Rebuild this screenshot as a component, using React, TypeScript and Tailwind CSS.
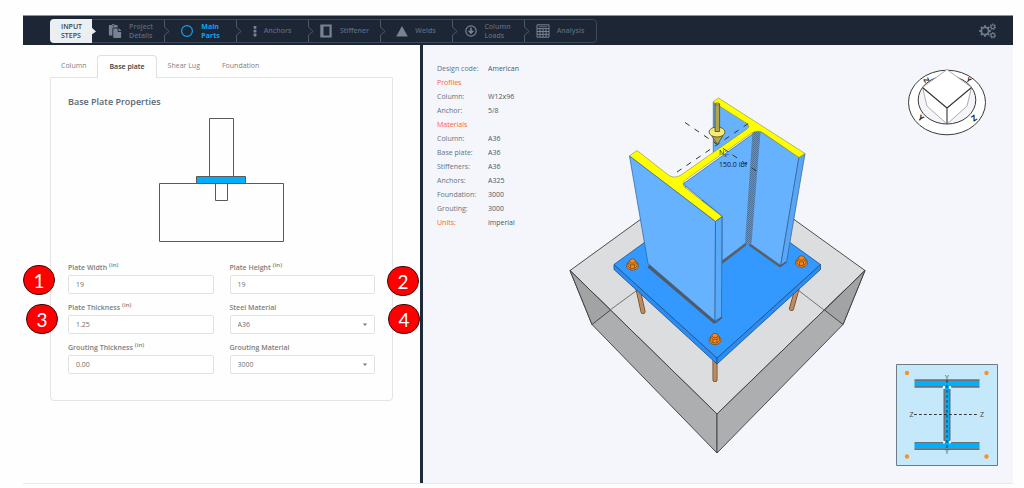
import type { ReactNode } from "react";
import { FaPaste } from "react-icons/fa";

const stepIcons = {
  project: <FaPaste className="size-3.5" aria-hidden />,
  parts: (
    <svg className="size-3.5" viewBox="0 0 14 14" aria-hidden>
      <circle cx="7" cy="7" r="5.4" fill="none" stroke="currentColor" strokeWidth="1.2" />
    </svg>
  ),
  anchors: (
    <svg className="h-3 w-1" viewBox="0 0 4 12" fill="currentColor" aria-hidden>
      <rect x=".6" y="1" width="2.8" height="2.8" rx=".6" />
      <rect x=".6" y="4.8" width="2.8" height="2.8" rx=".6" />
      <rect x=".6" y="8.6" width="2.8" height="2.8" rx=".6" />
    </svg>
  ),
  stiffener: (
    <svg className="size-3.5" viewBox="0 0 14 14" aria-hidden>
      <path fill="currentColor" fillRule="evenodd" d="M1.3 .5h11.4v13H1.3zM4.500 2.5v9h6v-9z" />
    </svg>
  ),
  welds: (
    <svg className="size-3" viewBox="0 0 12 12" aria-hidden>
      <path fill="currentColor" d="M6 1l5.8 10.4H.2z" />
    </svg>
  ),
  loads: (
    <svg className="size-3" viewBox="0 0 12 12" fill="none" stroke="currentColor" aria-hidden>
      <circle cx="6" cy="6" r="5.2" strokeWidth="1.2" />
      <path strokeWidth="1.6" d="M6 2.8v5M3.7 5.8L6 8.2l2.3-2.4" />
    </svg>
  ),
  analysis: (
    <svg className="size-3.5" viewBox="0 0 14 14" fill="none" stroke="currentColor" aria-hidden>
      <path strokeWidth="1" d="M1 .8h12v12.4H1zM1 4.6h12M1 7.5h12M1 10.3h12M4 4.6v8.6M7 4.6v8.6M10 4.6v8.6" />
      <path strokeWidth=".8" d="M2.8 2.7h8.4" />
    </svg>
  ),
};

const steps: { lines: string[]; icon: ReactNode; active?: boolean }[] = [
  { lines: ["Project", "Details"], icon: stepIcons.project },
  { lines: ["Main", "Parts"], icon: stepIcons.parts, active: true },
  { lines: ["Anchors"], icon: stepIcons.anchors },
  { lines: ["Stiffener"], icon: stepIcons.stiffener },
  { lines: ["Welds"], icon: stepIcons.welds },
  { lines: ["Column", "Loads"], icon: stepIcons.loads },
  { lines: ["Analysis"], icon: stepIcons.analysis },
];

const info: [string, string?][] = [
  ["Design code:", "American"],
  ["Profiles"],
  ["Column:", "W12x96"],
  ["Anchor:", "5/8"],
  ["Materials"],
  ["Column:", "A36"],
  ["Base plate:", "A36"],
  ["Stiffeners:", "A36"],
  ["Anchors:", "A325"],
  ["Foundation:", "3000"],
  ["Grouting:", "3000"],
  ["Units:", "imperial"],
];

function Gear({ cx, cy, r, teeth, w }: { cx: number; cy: number; r: number; teeth: number; w: number }) {
  const step = 360 / teeth;
  return (
    <g transform={`translate(${cx} ${cy})`}>
      <circle r={r} fill="none" stroke="currentColor" strokeWidth={w} />
      {Array.from({ length: teeth }, (_, i) => (
        <rect key={i} x={-w * 0.55} y={-r - w * 1.2} width={w * 1.1} height={w} fill="currentColor" transform={`rotate(${i * step})`} />
      ))}
    </g>
  );
}

function StepDivider() {
  return (
    <svg className="-mr-1.5 h-full w-1.5 shrink-0" viewBox="0 0 6 22" fill="none" stroke="#4d596b" aria-hidden>
      <path d="M.5 0v7l4.5 4.5L.5 15v7" />
    </svg>
  );
}

function Header() {
  return (
    <header className="flex h-[30px] items-center justify-between border-t border-[#8d939c] bg-[#1c2635] pl-[27px] pr-4">
      <nav aria-label="Input steps" className="flex h-6 items-stretch rounded-sm border border-[#3c4757]">
        <div className="-m-px flex w-[42px] items-center rounded-l-sm bg-[#eceff2] pl-[11px] text-[7px] leading-[9px] font-semibold text-[#3a4350]">
          <span>
            <span className="block">INPUT</span>
            <span className="block">STEPS</span>
          </span>
        </div>
        <svg className="h-full w-1.5" viewBox="0 0 6 22" aria-hidden>
          <path d="M0 7l5 4.5L0 15z" fill="#eceff2" />
        </svg>
        <ol className="flex">
          {steps.map((s, i) => (
            <li key={s.lines[0]} className={i === 0 ? "flex w-[67px]" : "flex w-[72px]"}>
              <button
                type="button"
                className={
                  s.active
                    ? "flex flex-1 items-center justify-center gap-[7px] text-left text-[7px] leading-[9px] font-bold text-[#0ea5ee]"
                    : "flex flex-1 items-center justify-center gap-[7px] text-left text-[7px] leading-[9px] font-semibold text-[#5c687a]"
                }
              >
                <span className={s.active ? "" : "text-[#778293]"}>{s.icon}</span>
                <span>
                  {s.lines.map((l) => (
                    <span key={l} className="block">
                      {l}
                    </span>
                  ))}
                </span>
              </button>
              {i < steps.length - 1 && <StepDivider />}
            </li>
          ))}
        </ol>
      </nav>
      <button type="button" aria-label="Settings" className="text-[#6c7a8d]">
        <svg className="h-4 w-[18px]" viewBox="0 0 18 16">
          <Gear cx={6} cy={8} r={3.6} teeth={8} w={1.8} />
          <Gear cx={13.8} cy={3.8} r={1.8} teeth={7} w={1.2} />
          <Gear cx={13.8} cy={12.3} r={1.8} teeth={7} w={1.2} />
        </svg>
      </button>
    </header>
  );
}

function Badge({ n, place }: { n: number; place: string }) {
  return (
    <span
      className={`absolute z-10 flex h-[30px] w-8 items-center justify-center rounded-full border border-[#3a0a0a] bg-[#fe0000] font-['Lato',sans-serif] text-[19px] leading-none text-white ${place}`}
    >
      {n}
    </span>
  );
}

const control =
  "block h-[19px] w-full appearance-none rounded-xs border border-[#e2e2e2] bg-white px-[7px] text-[7px] leading-[12px] text-[#6f6f6f]";

function Field({
  id,
  label,
  unit,
  value,
  select,
  badge,
}: {
  id: string;
  label: string;
  unit?: string;
  value: string;
  select?: boolean;
  badge?: ReactNode;
}) {
  return (
    <div className="relative">
      <label htmlFor={id} className="block h-[14px] text-[7px] leading-[14px] font-semibold text-[#7d7d7d]">
        {label}
        {unit && <sup className="ml-0.5 text-[6px] leading-none font-semibold">({unit})</sup>}
      </label>
      {select ? (
        <div className="relative">
          <select id={id} defaultValue={value} className={control}>
            <option>{value}</option>
          </select>
          <svg className="pointer-events-none absolute top-2 right-[7px] h-1 w-1.5" viewBox="0 0 6 4" aria-hidden>
            <path d="M.8.5h4.400L3 3z" fill="#7b7b7b" />
          </svg>
        </div>
      ) : (
        <input id={id} type="text" defaultValue={value} className={control} />
      )}
      {badge}
    </div>
  );
}

function PlateSketch() {
  return (
    <svg className="mx-auto mt-2 h-[126px] w-[126px]" viewBox="0 0 126 126" fill="none" stroke="#5a5a5a" strokeWidth="1" role="img" aria-label="Base plate section">
      <path d="M50.5 1.5h24v58h-24zM.5 66.5h124v58H.5zM56.5 66.5h12v17h-12z" />
      <path d="M37.5 59.5h49v7h-49z" fill="#00aeff" />
    </svg>
  );
}

const tabs = ["Column", "Base plate", "Shear Lug", "Foundation"];

function Editor() {
  return (
    <section className="border-r-[3px] border-[#1f2937] px-[27px] pt-[10px]">
      <div role="tablist" className="relative z-10 flex text-[7px] leading-[22px] text-[#7f7f7f]">
        {tabs.map((t) => (
          <button
            key={t}
            type="button"
            role="tab"
            aria-selected={t === "Base plate"}
            className={
              t === "Base plate"
                ? "-mb-px h-[23px] rounded-t-sm border border-b-0 border-[#e0e0e0] bg-white px-[11px] font-semibold text-[#343d45]"
                : "h-[22px] px-[11px]"
            }
          >
            {t}
          </button>
        ))}
      </div>
      <div className="rounded-b-sm border border-[#e4e4e4] px-[17px] pt-[17px] pb-[26px]">
        <h1 className="text-[9px] leading-[14px] font-semibold text-[#5c6973]">Base Plate Properties</h1>
        <PlateSketch />
        <form className="mt-[18px] grid grid-cols-2 gap-x-4 gap-y-[7px]">
          <Field id="plate-width" label="Plate Width" unit="in" value="19" badge={<Badge n={1} place="top-1 -left-[45px]" />} />
          <Field id="plate-height" label="Plate Height" unit="in" value="19" badge={<Badge n={2} place="top-[5px] -right-[44px]" />} />
          <Field id="plate-thickness" label="Plate Thickness" unit="in" value="1.25" badge={<Badge n={3} place="top-[3px] -left-[42px]" />} />
          <Field id="steel" label="Steel Material" value="A36" select badge={<Badge n={4} place="top-[3px] -right-[45px]" />} />
          <Field id="grout-thickness" label="Grouting Thickness" unit="in" value="0.00" />
          <Field id="grout" label="Grouting Material" value="3000" select />
        </form>
      </div>
    </section>
  );
}

function Bolt({ x, y }: { x: number; y: number }) {
  return (
    <g transform={`translate(${x} ${y})`} stroke="#7a3f08" strokeWidth=".7" fill="#f08a24">
      <ellipse cx="0" cy="1.6" rx="6" ry="4.6" />
      <path d="M-4.5-1.5L-2-4H2.2L4.5-1.5V2.2L2 4.4H-2L-4.5 2.2z" />
      <path d="M-4.5-1.5L-2 .8H2L4.5-1.5M-2 .8v3.4M2 .8v3.4" fill="none" />
      <ellipse cx="0" cy="-3" rx="3" ry="2.2" />
    </g>
  );
}

function Scene() {
  return (
    <svg className="mt-[43px] h-[370px] w-[306px]" viewBox="564 88 306 370" role="img" aria-label="3D model of the column base">
      <defs>
        <pattern id="fillet" width="2" height="2" patternUnits="userSpaceOnUse">
          <rect width="2" height="2" fill="#5d97d3" />
          <path d="M0 0h1v1H0zM1 1h1v1H1z" fill="#4b6f96" />
        </pattern>
      </defs>
      <g stroke="#3c3c3c" strokeWidth=".9" strokeLinejoin="round">
        <path d="M570 270.5L717 164 865 270.5 717 414z" fill="#dcdddf" />
        <path d="M570 270.5L717 414V453L592 324.5z" fill="#adaeb0" />
        <path d="M865 270.5L717 414V453L843 324.5z" fill="#adaeb0" />
        <path d="M570 270.5L610.5 310 592 324.5z" fill="#a2a3a5" />
        <path d="M865 270.5L824.5 310 843 324.5z" fill="#a2a3a5" />
        <path d="M610 310L636 291M824 310L798 290" fill="none" stroke="#666" />
      </g>
      <g strokeLinecap="round">
        <path d="M638 289L643 311.5M797 289L791.5 308.5M715 360V379.5" stroke="#6d4a2c" strokeWidth="5" />
        <path d="M638 289L643 311.5M797 289L791.5 308.5M715 360V379.5" stroke="#bd8c60" strokeWidth="3.4" />
      </g>
      <g stroke="#1d4f8a" strokeWidth=".8" strokeLinejoin="round">
        <path d="M614 264.5V269.5L717 364V358z" fill="#2b8cf2" />
        <path d="M820.5 264.5V269.5L717 364V358z" fill="#2b8cf2" />
        <path d="M614 264.5L717 190 820.5 264.5 717 358z" fill="#3399ff" />
      </g>
      <Bolt x={632.5} y={264} />
      <Bolt x={801.5} y={261} />
      <Bolt x={715} y={338.5} />

      <g stroke="#2f5f93" strokeWidth=".7" strokeLinejoin="round">
        <path d="M713.3 102L752 125 748 131 713.3 154z" fill="#66b2ff" />
        <path d="M683 184L757 131 747 243 722 261V216z" fill="#66b2ff" />
        <path d="M760 131L799 157 780.5 266.5 748 243z" fill="#66b2ff" />
        <path d="M799 157L805 153.5 786.5 262.5 780.5 266.5z" fill="#5aa6f5" />
      </g>
      <path d="M752.5 131H760.5L751.5 243.5H745z" fill="url(#fillet)" />
      <path d="M722 262.5L746 244M749.5 244.5L780.5 266.5" stroke="#59606a" strokeWidth="2.6" fill="none" />
      <path d="M780.5 266L786 262" stroke="#4d5660" strokeWidth="1.2" />
      <path
        d="M713 102L718.5 98 805 153.5 799 157.5 762.5 132.5Q757 129.500 751 133.5L686 179.500Q681 183 685 187.500L722 216.5 715.5 221.5 629.5 156 637 150.500 669 175.500Q675 179 681 175L747 129Q750.5 126 747 123.500z"
        fill="#ffff00"
        stroke="#8c8c2c"
        strokeWidth=".6"
      />
      <path d="M648.5 266L715 322.5" stroke="#525a64" strokeWidth="3.4" />
      <path d="M715 323L722 317.5" stroke="#4d5660" strokeWidth="1.2" />
      <g stroke="#2f5f93" strokeWidth=".7" strokeLinejoin="round">
        <path d="M629.5 156L715.5 221.5 715 321 648 263.5z" fill="#66b2ff" />
        <path d="M715.5 221.5L722 216.5 721.500 317 715 321z" fill="#5aaafa" />
      </g>
      <path d="M685 122.5L757 171.5M677 172L749 123" stroke="#333" strokeWidth="1" strokeDasharray="5.500 6" fill="none" />
      <g stroke="#4c4720" strokeWidth=".8" strokeLinejoin="round">
        <path d="M711.5 135.5H723L717.5 144.5z" fill="#b8a94c" />
        <ellipse cx="717" cy="132" rx="8" ry="5" fill="#f7eb78" />
        <path d="M715 104h4.6v27.5h-4.6z" fill="#b3a54a" />
        <ellipse cx="717.3" cy="104" rx="2.3" ry="1" fill="#f7eb78" />
      </g>
      <g fill="#151515" fontFamily="'Open Sans', sans-serif" fontSize="7">
        <text x="719" y="155">
          N<tspan fontSize="5" dy="1.5">x</tspan>
          <tspan dy="-1.5">:</tspan>
        </text>
        <text x="719" y="167">150.0 lbf</text>
      </g>
    </svg>
  );
}

function ViewCube() {
  return (
    <svg className="h-[70px] w-20" viewBox="907 68 80 70" role="img" aria-label="View orientation">
      <g fill="#fff" stroke="#3a3a3a" strokeWidth="1">
        <ellipse cx="947" cy="102.5" rx="38.5" ry="32.3" />
        <ellipse cx="947" cy="100" rx="28.8" ry="24" fill="#f3f5fa" />
      </g>
      <g stroke="#999" strokeWidth=".8" fill="#fff" strokeLinejoin="round">
        <path d="M922.5 87.5L947 69.5 971.5 87.5 967 106 947 124 927 106z" />
        <path d="M922.5 87.5L947 108 971.5 87.5M947 108V124" fill="none" stroke="#333" strokeWidth="1.1" />
      </g>
      <g fill="#222" fontFamily="'Open Sans', sans-serif" fontWeight="700" fontSize="8" textAnchor="middle">
        <text transform="translate(926.500 80) rotate(62)" y="2.500" fontSize="7">Z</text>
        <text transform="translate(969 79.500) rotate(35)" y="3" fontSize="7">Y</text>
        <text transform="translate(921 118) rotate(35)" y="3">Y</text>
        <text transform="translate(974 118) rotate(-35)" y="3">Z</text>
      </g>
    </svg>
  );
}

function PlanView() {
  return (
    <svg className="size-[102px]" viewBox="896 364 102 102" role="img" aria-label="Plan view">
      <path d="M896.5 364.5h101v101h-101z" fill="#c5e8fa" stroke="#6f7b84" />
      <g fill="#f6922b">
        <circle cx="907" cy="373" r="2.2" />
        <circle cx="986.5" cy="373" r="2.2" />
        <circle cx="907" cy="456.5" r="2.2" />
        <circle cx="986.5" cy="456.5" r="2.2" />
      </g>
      <path d="M914.5 381h65v5h-65zM914.5 443.5h65v5h-65zM945 386h4v57.5h-4z" fill="#00b0ff" />
      <path d="M914.5 380.2h65M914.5 386.8H943M951 386.8h28.5M914.5 442.8H943M951 442.8h28.5M914.5 449.2h65M944.3 389v52M949.7 389v52" stroke="#6a7278" strokeWidth="1.7" />
      <path d="M943 388l1.5-1.5M951 388l-1.500-1.500M943 441l1.5 1.500M951 441l-1.500 1.500" stroke="#fff" strokeWidth="1.5" />
      <path d="M947 380v70M914 414.5h64" stroke="#222" strokeWidth=".9" strokeDasharray="2.800 2.200" />
      <g fill="#444" fontFamily="'Open Sans', sans-serif" fontSize="7" textAnchor="middle">
        <text x="947" y="380">Y</text>
        <text x="947" y="454">Y</text>
        <text x="911.5" y="417">Z</text>
        <text x="982" y="417">Z</text>
      </g>
    </svg>
  );
}

function Viewer() {
  return (
    <section className="flex bg-[#f4f6fb] pr-[15px] pl-[14px]">
      <table className="mt-[17px] w-[100px] shrink-0 self-start text-left text-[7px] leading-[14px]">
        <tbody>
          {info.map(([k, v], i) => {
            const accent = !v || k === "Units:";
            return (
              <tr key={i}>
                <th
                  scope="row"
                  className={
                    accent
                      ? "h-[14px] w-[51px] p-0 font-normal whitespace-nowrap text-[#ff5f2e]"
                      : "h-[14px] w-[51px] p-0 font-normal whitespace-nowrap text-[#64747e]"
                  }
                >
                  {k}
                </th>
                <td className="p-0 text-[#4d5763]">{v}</td>
              </tr>
            );
          })}
        </tbody>
      </table>
      <div className="flex flex-1 items-start justify-center">
        <Scene />
      </div>
      <div className="flex shrink-0 flex-col items-center justify-between pt-[23px] pb-[17px]">
        <ViewCube />
        <PlanView />
      </div>
    </section>
  );
}

export default function App() {
  return (
    <div className="flex min-h-screen flex-col bg-[#fefefe] pt-[15px] pr-[11px] pb-1 pl-[23px] font-['Open_Sans',sans-serif]">
      <Header />
      <main className="grid flex-1 grid-cols-[400fr_590fr] border-b border-[#e9e9e9]">
        <Editor />
        <Viewer />
      </main>
    </div>
  );
}
